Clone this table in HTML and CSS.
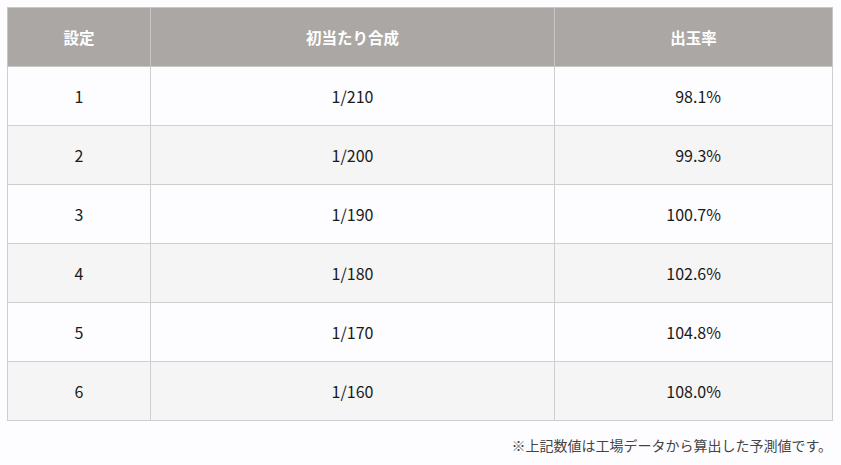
FILE: index.html
```html
<!DOCTYPE html>
<html lang="ja">
<head>
<meta charset="utf-8">
<link rel="stylesheet" href="styles.css">
</head>
<body>
<div class="wrap">
<table class="spec">
<colgroup><col class="c1"><col class="c2"><col class="c3"></colgroup>
<thead>
<tr><th>設定</th><th>初当たり合成</th><th>出玉率</th></tr>
</thead>
<tbody>
<tr><td>1</td><td>1/210</td><td><span class="pct">98.1%</span></td></tr>
<tr><td>2</td><td>1/200</td><td><span class="pct">99.3%</span></td></tr>
<tr><td>3</td><td>1/190</td><td><span class="pct">100.7%</span></td></tr>
<tr><td>4</td><td>1/180</td><td><span class="pct">102.6%</span></td></tr>
<tr><td>5</td><td>1/170</td><td><span class="pct">104.8%</span></td></tr>
<tr><td>6</td><td>1/160</td><td><span class="pct">108.0%</span></td></tr>
</tbody>
</table>
<p class="note">※上記数値は工場データから算出した予測値です。</p>
</div>
</body>
</html>
```
FILE: styles.css
```css
html, body {
  margin: 0;
  padding: 0;
  background: #fdfdff;
}
body {
  font-family: "Noto Sans CJK JP", "Noto Sans", sans-serif;
  color: #1a1a1a;
}
.wrap {
  padding: 7px 9px 0 7px;
}
.spec {
  width: 825px;
  border-collapse: collapse;
  table-layout: fixed;
  font-size: 16px;
}
.c1 { width: 143px; }
.c2 { width: 404px; }
.c3 { width: 278px; }
.spec th, .spec td {
  border: 1px solid #cfcfcf;
  text-align: center;
  height: 59px;
  padding: 0;
  box-sizing: border-box;
}
.spec th {
  background: #aba7a5;
  color: #fff;
  font-size: 15.5px;
  font-weight: bold;
  border-color: #c9c7c6;
}
.spec tbody tr:nth-child(odd) td { background: #fdfdff; }
.spec tbody tr:nth-child(even) td { background: #f5f5f5; }
.pct {
  display: inline-block;
  width: 55px;
  text-align: right;
  white-space: nowrap;
}
.note {
  margin: 14px 0 0 0;
  text-align: right;
  font-size: 14px;
  color: #444;
}
```
